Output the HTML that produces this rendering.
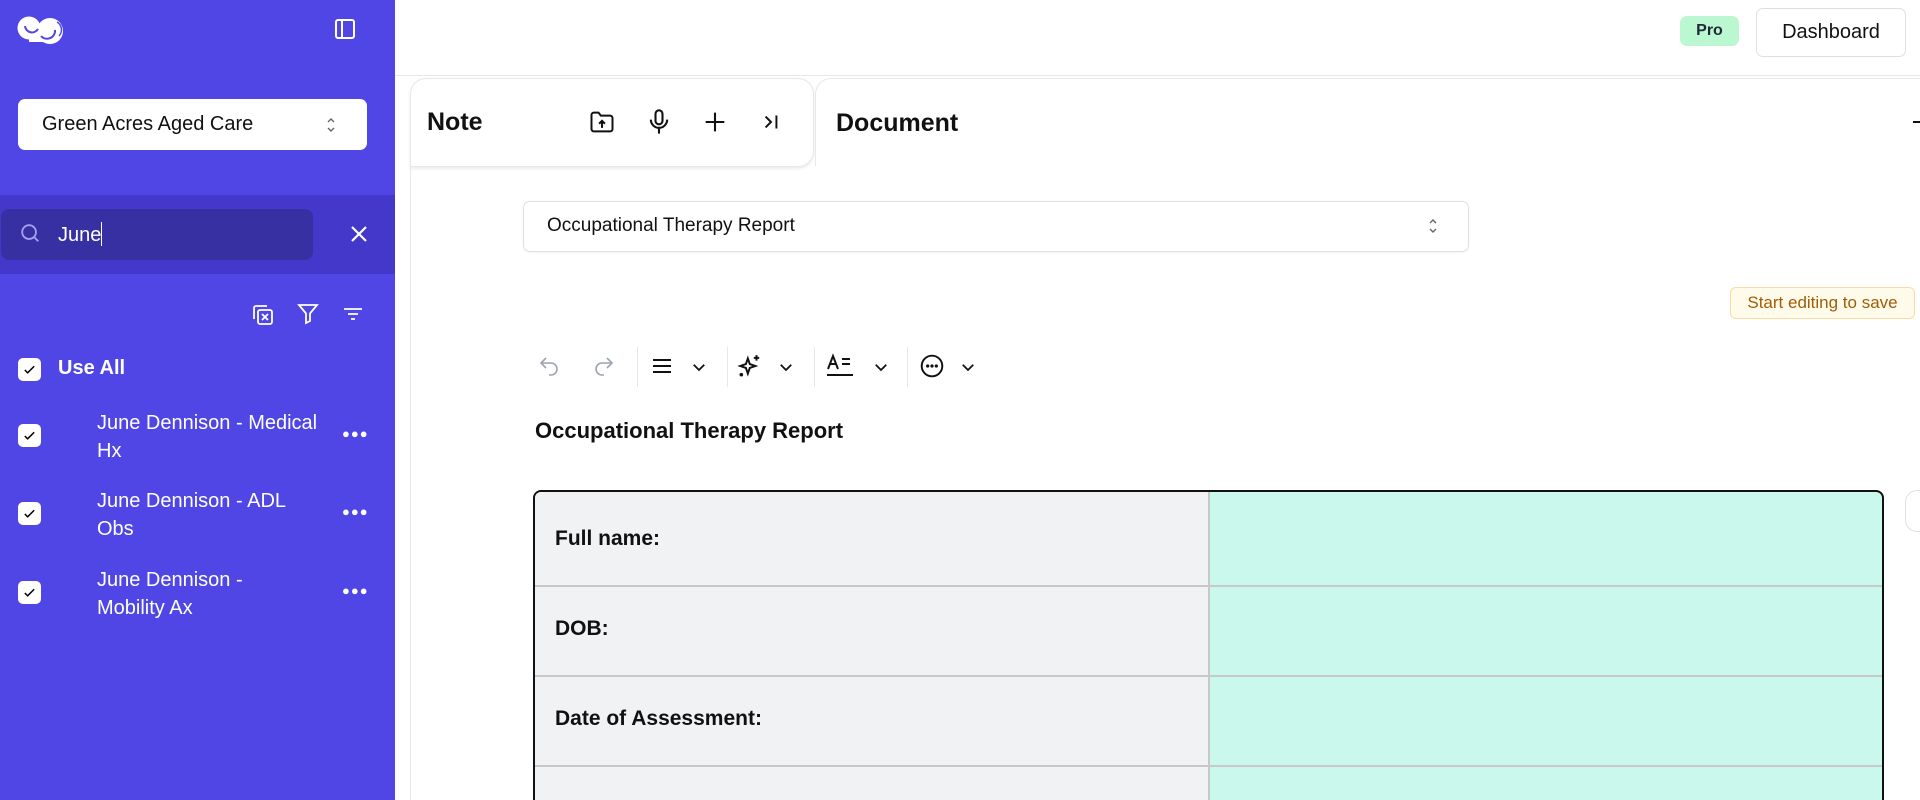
<!DOCTYPE html>
<html style="overflow:hidden;height:800px"><head><meta charset="utf-8">
<style>
*{box-sizing:border-box;margin:0;padding:0}
body{width:1920px;height:800px;overflow:hidden;background:#fff;font-family:"Liberation Sans",Arial,sans-serif;position:relative;color:#111}
.wrap{position:absolute;left:0;top:0;width:1920px;height:800px;overflow:hidden}
.abs{position:absolute}
.sb{left:0;top:0;width:395px;height:800px;background:#4f46e5}
.band{left:0;top:195px;width:395px;height:79px;background:#4338ca}
.search{left:1px;top:209px;width:312px;height:51px;background:#3730a3;border-radius:8px}
.white{color:#fff}
.cb{width:23px;height:23px;background:#fff;border-radius:5px}
.item{left:97px;width:240px;font-size:20px;line-height:28px;color:#fff;white-space:nowrap}
.dots{left:342px;color:#fff;font-size:13px;letter-spacing:1px}
.lbl{font-size:21px;font-weight:bold;left:555px}
</style></head><body><div class="wrap">
<div class="abs sb"></div>
<svg class="abs" style="left:17px;top:14px" width="48" height="32" viewBox="0 0 48 32">
<circle cx="12" cy="14" r="11.5" fill="#fff"/><circle cx="33" cy="17" r="13" fill="#fff"/><rect x="12" y="10" width="20" height="18" fill="#fff"/>
<path d="M8 12a7 7 0 0 0 13 3" fill="none" stroke="#4f46e5" stroke-width="2"/>
<path d="M24 22a8 8 0 0 0 14 -6" fill="none" stroke="#4f46e5" stroke-width="2"/>
<path d="M40 8a9 9 0 0 1 2 14" fill="none" stroke="#4f46e5" stroke-width="1.5"/>
</svg>
<svg class="abs" style="left:333px;top:17px" width="24" height="24" viewBox="0 0 24 24" fill="none" stroke="#fff" stroke-width="2"><rect x="3" y="3" width="18" height="18" rx="2"/><path d="M9 3v18"/></svg>
<div class="abs" style="left:18px;top:99px;width:349px;height:51px;background:#fff;border-radius:7px"></div>
<div class="abs" style="left:42px;top:113px;font-size:20px;color:#111">Green Acres Aged Care</div>
<svg class="abs" style="left:324px;top:116px" width="14" height="18" viewBox="0 0 14 18" fill="none" stroke="#666" stroke-width="1.4"><path d="M4 6l3-3 3 3M4 12l3 3 3-3"/></svg>
<div class="abs band"></div>
<div class="abs search"></div>
<svg class="abs" style="left:19px;top:222px" width="22" height="22" viewBox="0 0 24 24" fill="none" stroke="#a5a1f0" stroke-width="2"><circle cx="11" cy="11" r="7.5"/><path d="M17 17l4 4"/></svg>
<div class="abs white" style="left:58px;top:222px;font-size:20px">June<span style="display:inline-block;width:1px;height:24px;background:#fff;vertical-align:-5px"></span></div>
<svg class="abs" style="left:347px;top:222px" width="24" height="24" viewBox="0 0 24 24" fill="none" stroke="#fff" stroke-width="2.2"><path d="M5 5l14 14M19 5L5 19"/></svg>
<svg class="abs" style="left:251px;top:302px" width="24" height="24" viewBox="0 0 24 24" fill="none" stroke="#fff" stroke-width="1.8"><path d="M16 4H5a2 2 0 0 0-2 2v11"/><rect x="7" y="8" width="14" height="14" rx="2"/><path d="M11 12l6 6M17 12l-6 6"/></svg>
<svg class="abs" style="left:296px;top:301px" width="24" height="24" viewBox="0 0 24 24" fill="none" stroke="#fff" stroke-width="1.8"><path d="M3 4h18l-7 8.5V20l-4 2v-9.5z"/></svg>
<svg class="abs" style="left:341px;top:302px" width="24" height="24" viewBox="0 0 24 24" fill="none" stroke="#fff" stroke-width="1.8"><path d="M3 7h18M7 12h10M10 17h4"/></svg>
<div class="abs cb" style="left:18px;top:358px"></div>
<svg class="abs" style="left:22px;top:362px" width="15" height="15" viewBox="0 0 16 16" fill="none" stroke="#000" stroke-width="1.6"><path d="M3 8.5l3 3 7-7"/></svg>
<div class="abs white" style="left:58px;top:357px;font-size:20px;font-weight:bold">Use All</div>

<div class="abs cb" style="left:18px;top:424px"></div>
<svg class="abs" style="left:22px;top:428px" width="15" height="15" viewBox="0 0 16 16" fill="none" stroke="#000" stroke-width="1.6"><path d="M3 8.5l3 3 7-7"/></svg>
<div class="abs item" style="top:409px">June Dennison - Medical<br>Hx</div>
<div class="abs dots" style="top:426px">●●●</div>

<div class="abs cb" style="left:18px;top:502px"></div>
<svg class="abs" style="left:22px;top:506px" width="15" height="15" viewBox="0 0 16 16" fill="none" stroke="#000" stroke-width="1.6"><path d="M3 8.5l3 3 7-7"/></svg>
<div class="abs item" style="top:487px">June Dennison - ADL<br>Obs</div>
<div class="abs dots" style="top:504px">●●●</div>

<div class="abs cb" style="left:18px;top:581px"></div>
<svg class="abs" style="left:22px;top:585px" width="15" height="15" viewBox="0 0 16 16" fill="none" stroke="#000" stroke-width="1.6"><path d="M3 8.5l3 3 7-7"/></svg>
<div class="abs item" style="top:566px">June Dennison -<br>Mobility Ax</div>
<div class="abs dots" style="top:583px">●●●</div>

<div class="abs" style="left:395px;top:75px;width:1525px;height:1px;background:#e5e7eb"></div>
<div class="abs" style="left:1680px;top:16px;width:59px;height:30px;background:#bbf7d0;border-radius:7px;font-size:16px;font-weight:bold;color:#1f2937;text-align:center;line-height:30px">Pro</div>
<div class="abs" style="left:1756px;top:8px;width:150px;height:49px;border:1px solid #e0e0e0;border-radius:7px;font-size:20px;color:#111;text-align:center;line-height:47px">Dashboard</div>

<div class="abs" style="left:410px;top:78px;width:404px;height:89px;border:1px solid #e5e7eb;border-radius:16px 16px 16px 0;box-shadow:0 2px 3px rgba(0,0,0,.08);background:#fff"></div>
<div class="abs" style="left:427px;top:108px;font-size:25px;font-weight:bold">Note</div>
<svg class="abs" style="left:588px;top:108px" width="28" height="28" viewBox="0 0 24 24" fill="none" stroke="#111" stroke-width="1.7"><path d="M3 6a2 2 0 0 1 2-2h4l2 2.5h8a2 2 0 0 1 2 2V18a2 2 0 0 1-2 2H5a2 2 0 0 1-2-2z"/><path d="M12 17v-6M9.5 13.5L12 11l2.5 2.5"/></svg>
<svg class="abs" style="left:645px;top:108px" width="28" height="28" viewBox="0 0 24 24" fill="none" stroke="#111" stroke-width="1.8"><rect x="9" y="2" width="6" height="12" rx="3"/><path d="M5 10a7 7 0 0 0 14 0M12 17v5"/></svg>
<svg class="abs" style="left:701px;top:108px" width="28" height="28" viewBox="0 0 24 24" fill="none" stroke="#111" stroke-width="1.8"><path d="M12 4v16M4 12h16"/></svg>
<svg class="abs" style="left:758px;top:109px" width="26" height="26" viewBox="0 0 24 24" fill="none" stroke="#111" stroke-width="1.8"><path d="M7 7l5 5-5 5M17 6v12"/></svg>
<div class="abs" style="left:815px;top:78px;width:1110px;height:88px;border-left:1px solid #e5e7eb;border-top:1px solid #e5e7eb;border-radius:16px 0 0 0"></div>
<div class="abs" style="left:836px;top:109px;font-size:25px;font-weight:bold">Document</div>
<div class="abs" style="left:1913px;top:121px;width:8px;height:2px;background:#111"></div>
<div class="abs" style="left:410px;top:166px;width:1px;height:634px;background:#e5e7eb"></div>

<div class="abs" style="left:523px;top:201px;width:946px;height:51px;border:1px solid #e0e0e0;border-radius:7px;box-shadow:0 1px 2px rgba(0,0,0,.05)"></div>
<div class="abs" style="left:547px;top:215px;font-size:19px;color:#111">Occupational Therapy Report</div>
<svg class="abs" style="left:1426px;top:217px" width="14" height="18" viewBox="0 0 14 18" fill="none" stroke="#666" stroke-width="1.4"><path d="M4 6l3-3 3 3M4 12l3 3 3-3"/></svg>

<div class="abs" style="left:1730px;top:287px;width:185px;height:32px;background:#fffbeb;border:1px solid #fcd9a0;border-radius:6px;color:#a15c07;font-size:17px;text-align:center;line-height:30px">Start editing to save</div>

<svg class="abs" style="left:537px;top:354px" width="24" height="24" viewBox="0 0 24 24" fill="none" stroke="#9ca3af" stroke-width="1.6"><path d="M9 14L4 9l5-5"/><path d="M4 9h10a6 6 0 0 1 0 12h-2"/></svg>
<svg class="abs" style="left:592px;top:354px" width="24" height="24" viewBox="0 0 24 24" fill="none" stroke="#9ca3af" stroke-width="1.6"><path d="M15 14l5-5-5-5"/><path d="M20 9H10a6 6 0 0 0 0 12h2"/></svg>
<div class="abs" style="left:637px;top:347px;width:1px;height:40px;background:#e5e7eb"></div>
<svg class="abs" style="left:650px;top:354px" width="24" height="24" viewBox="0 0 24 24" fill="none" stroke="#111" stroke-width="2"><path d="M3 6h18M3 12h18M3 18h18"/></svg>
<svg class="abs" style="left:690px;top:358px" width="18" height="18" viewBox="0 0 24 24" fill="none" stroke="#111" stroke-width="2.4"><path d="M5 9l7 7 7-7"/></svg>
<div class="abs" style="left:727px;top:347px;width:1px;height:40px;background:#e5e7eb"></div>
<svg class="abs" style="left:737px;top:353px" width="26" height="26" viewBox="0 0 24 24" fill="none" stroke="#111" stroke-width="1.8"><path d="M10 5l1.8 5.2L17 12l-5.2 1.8L10 19l-1.8-5.2L3 12l5.2-1.8z"/><path d="M18 2v5M15.5 4.5h5"/><circle cx="4" cy="20" r="0.8" fill="#111"/></svg>
<svg class="abs" style="left:777px;top:358px" width="18" height="18" viewBox="0 0 24 24" fill="none" stroke="#111" stroke-width="2.4"><path d="M5 9l7 7 7-7"/></svg>
<div class="abs" style="left:814px;top:347px;width:1px;height:40px;background:#e5e7eb"></div>
<svg class="abs" style="left:826px;top:353px" width="30" height="26" viewBox="0 0 30 26" fill="none" stroke="#111" stroke-width="2"><path d="M2 16L7 3l5 13M4 11h6M16 6h8M16 11h8M1 22h26"/></svg>
<svg class="abs" style="left:872px;top:358px" width="18" height="18" viewBox="0 0 24 24" fill="none" stroke="#111" stroke-width="2.4"><path d="M5 9l7 7 7-7"/></svg>
<div class="abs" style="left:907px;top:347px;width:1px;height:40px;background:#e5e7eb"></div>
<svg class="abs" style="left:919px;top:353px" width="26" height="26" viewBox="0 0 24 24" fill="none" stroke="#111" stroke-width="1.8"><circle cx="12" cy="12" r="9.5"/><circle cx="8" cy="12" r=".6" fill="#111"/><circle cx="12" cy="12" r=".6" fill="#111"/><circle cx="16" cy="12" r=".6" fill="#111"/></svg>
<svg class="abs" style="left:959px;top:358px" width="18" height="18" viewBox="0 0 24 24" fill="none" stroke="#111" stroke-width="2.4"><path d="M5 9l7 7 7-7"/></svg>

<div class="abs" style="left:535px;top:418px;font-size:22px;font-weight:bold">Occupational Therapy Report</div>

<div class="abs" style="left:533px;top:490px;width:1351px;height:330px;border:2px solid #111;border-radius:8px;overflow:hidden;background:#cbf8ec">
  <div class="abs" style="left:0;top:0;width:675px;height:330px;background:#f1f2f4;border-right:2px solid #c8c8c8"></div>
  <div class="abs" style="left:0;top:93px;width:1351px;height:2px;background:#c8c8c8"></div>
  <div class="abs" style="left:0;top:183px;width:1351px;height:2px;background:#c8c8c8"></div>
  <div class="abs" style="left:0;top:273px;width:1351px;height:2px;background:#c8c8c8"></div>
</div>
<div class="abs lbl" style="top:527px">Full name:</div>
<div class="abs lbl" style="top:617px">DOB:</div>
<div class="abs lbl" style="top:707px">Date of Assessment:</div>
<div class="abs" style="left:1905px;top:490px;width:40px;height:42px;border:1px solid #e0e0e0;border-radius:12px;background:#fff"></div>
</div></body></html>
